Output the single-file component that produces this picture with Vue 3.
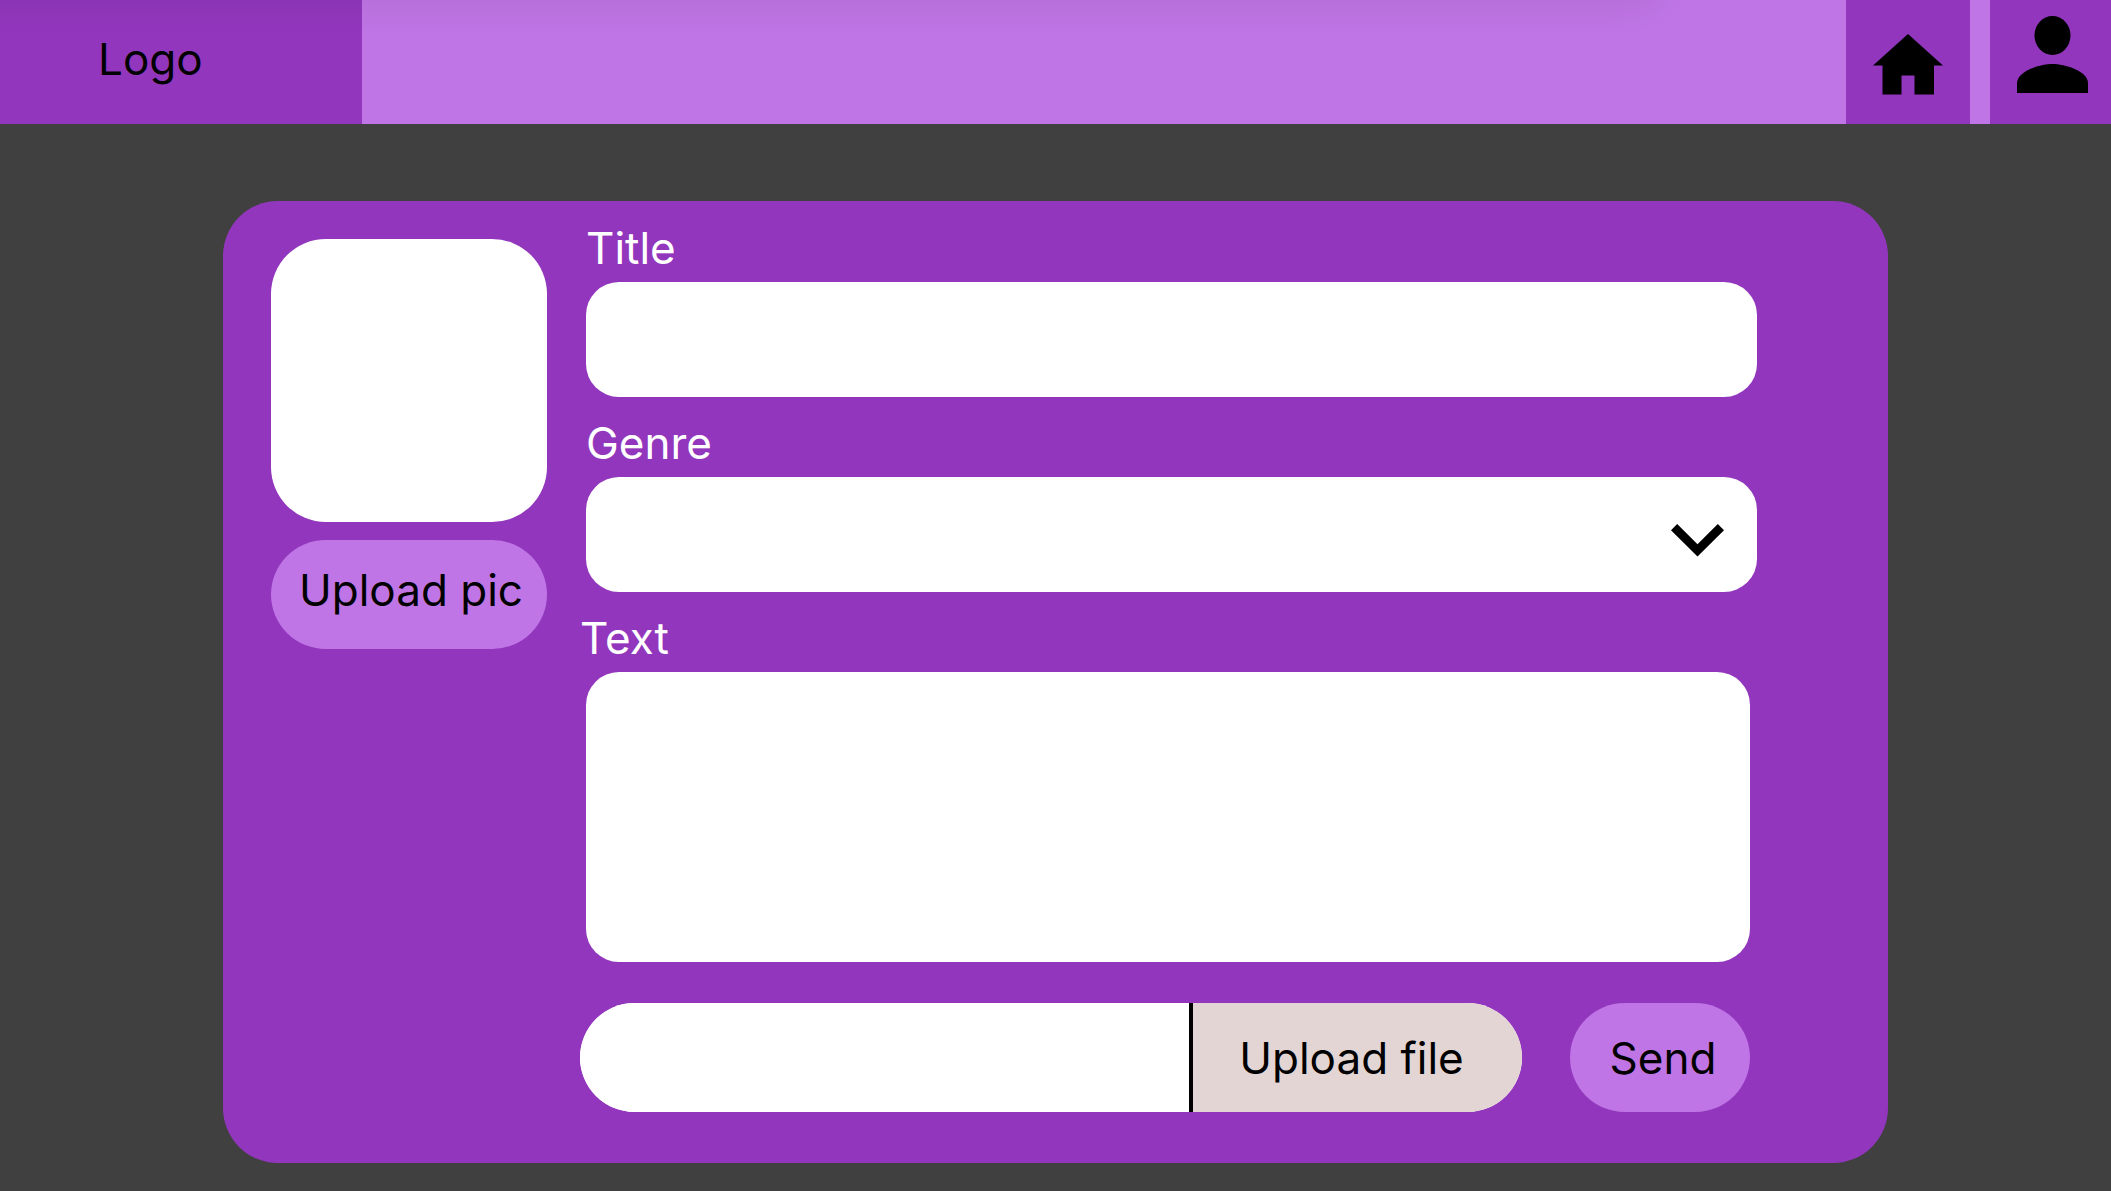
<script setup>
import { ref } from 'vue'

const title = ref('')
const genre = ref('')
const body = ref('')
const fileName = ref('')
</script>

<template>
  <div class="page">
    <header class="topbar">
      <a class="logo" href="#">Logo</a>
      <nav class="nav">
        <a class="nav-link" href="#" aria-label="Home">
          <svg width="70" height="61" viewBox="0 0 70 61" aria-hidden="true">
            <path d="M35 0 L70 31.5 H61 V60.5 H41.5 V41.5 H28.5 V60.5 H9.5 V31.5 H0 Z" />
          </svg>
        </a>
        <a class="nav-link profile" href="#" aria-label="Profile">
          <svg width="71" height="77" viewBox="0 0 71 77" aria-hidden="true">
            <ellipse cx="35.5" cy="19.5" rx="18" ry="19.5" />
            <path d="M0 77 V67.4 C0 54.6 23.6 48 35.5 48 C47.4 48 71 54.6 71 67.4 V77 Z" />
          </svg>
        </a>
      </nav>
    </header>

    <main class="main">
      <form class="card" @submit.prevent>
        <div class="picture">
          <div class="preview"></div>
          <button class="pill upload-pic" type="button">Upload pic</button>
        </div>

        <div class="fields">
          <div class="field">
            <label for="title">Title</label>
            <input id="title" v-model="title" class="control" type="text" />
          </div>
          <div class="field">
            <label for="genre">Genre</label>
            <div class="select">
              <select id="genre" v-model="genre" class="control">
                <option value=""></option>
              </select>
              <svg class="chevron" width="53" height="33" viewBox="0 0 53 33" aria-hidden="true">
                <path d="M0 6.2 L6.2 0 L26.5 20.2 L46.8 0 L53 6.2 L26.5 32.6 Z" />
              </svg>
            </div>
          </div>
          <div class="field text">
            <label for="body">Text</label>
            <textarea id="body" v-model="body" class="control"></textarea>
          </div>
          <div class="actions">
            <div class="file">
              <input v-model="fileName" class="file-name" type="text" aria-label="File name" />
              <button class="upload-file" type="button">Upload file</button>
            </div>
            <button class="pill send" type="submit">Send</button>
          </div>
        </div>
      </form>
    </main>
  </div>
</template>

<style>
body {
  background: #404040;
}
</style>

<style scoped>
.page,
.page * {
  box-sizing: border-box;
}

.page {
  font-family: Inter, "Liberation Sans", sans-serif;
  font-size: 44px;
  font-weight: 400;
  line-height: 53px;
  color: #000;
}

.topbar {
  position: relative;
  display: flex;
  justify-content: space-between;
  height: 124px;
  background: #bf75e5;
  overflow: hidden;
}

/* soft shadow falling on the bar from above */
.topbar::before {
  content: "";
  position: absolute;
  top: -60px;
  left: -60px;
  right: 450px;
  height: 60px;
  border-radius: 55px;
  box-shadow: 0 4px 36px rgba(0, 0, 0, 0.08);
}

.logo {
  width: 362px;
  padding: 33px 98px 0;
  background: #9237bd;
  color: #000;
  text-decoration: none;
}

.nav {
  display: flex;
  gap: 20px;
}

.nav-link {
  display: flex;
  justify-content: center;
  width: 124px;
  padding-top: 34px;
  background: #9237bd;
}

.profile {
  width: 121px;
  padding: 16px 0 0 4px;
}

.main {
  padding: 77px 223px 28px;
}

.card {
  display: flex;
  gap: 33px;
  padding: 21px 131px 51px 48px;
  border-radius: 55px;
  background: #9237bd;
}

.picture {
  display: flex;
  flex: none;
  flex-direction: column;
  gap: 18px;
  width: 276px;
  padding-top: 17px;
}

.preview {
  height: 283px;
  border-radius: 55px;
  background: #fff;
}

button,
input,
select,
textarea {
  margin: 0;
  border: 0;
  font: inherit;
  color: inherit;
}

.pill {
  height: 109px;
  border-radius: 55px;
  background: #bf75e5;
}

.upload-pic {
  padding: 0 0 8px 4px;
  white-space: nowrap;
}

.fields {
  display: flex;
  flex: 1;
  flex-direction: column;
  gap: 20px;
  min-width: 0;
}

.field {
  display: flex;
  flex-direction: column;
  gap: 7px;
  padding-left: 6px;
  color: #fff;
}

.control {
  width: 100%;
  height: 115px;
  padding: 0 32px;
  border-radius: 33px;
  background: #fff;
  color: #000;
}

.select {
  display: grid;
  align-items: center;
}

.select > * {
  grid-area: 1 / 1;
}

.select select {
  appearance: none;
}

.chevron {
  justify-self: end;
  margin-right: 33px;
  margin-top: 12px;
  pointer-events: none;
}

.text {
  padding: 0 7px 0 0;
}

.text .control {
  width: calc(100% - 6px);
  height: 290px;
  margin-left: 6px;
  padding: 24px 32px;
  resize: none;
}

.actions {
  display: flex;
  gap: 48px;
  padding: 21px 7px 0 0;
}

.file {
  display: flex;
  flex: 1;
  min-width: 0;
  height: 109px;
  border-radius: 55px;
  background: #fff;
  overflow: hidden;
}

.file-name {
  flex: 1;
  min-width: 0;
  padding: 0 40px;
  background: #fff;
}

.upload-file {
  width: 333px;
  padding: 2px 12px 0 0;
  border-left: 4px solid #000;
  background: #e3d5d4;
}

.send {
  width: 180px;
  padding: 2px 0 0 6px;
}
</style>
